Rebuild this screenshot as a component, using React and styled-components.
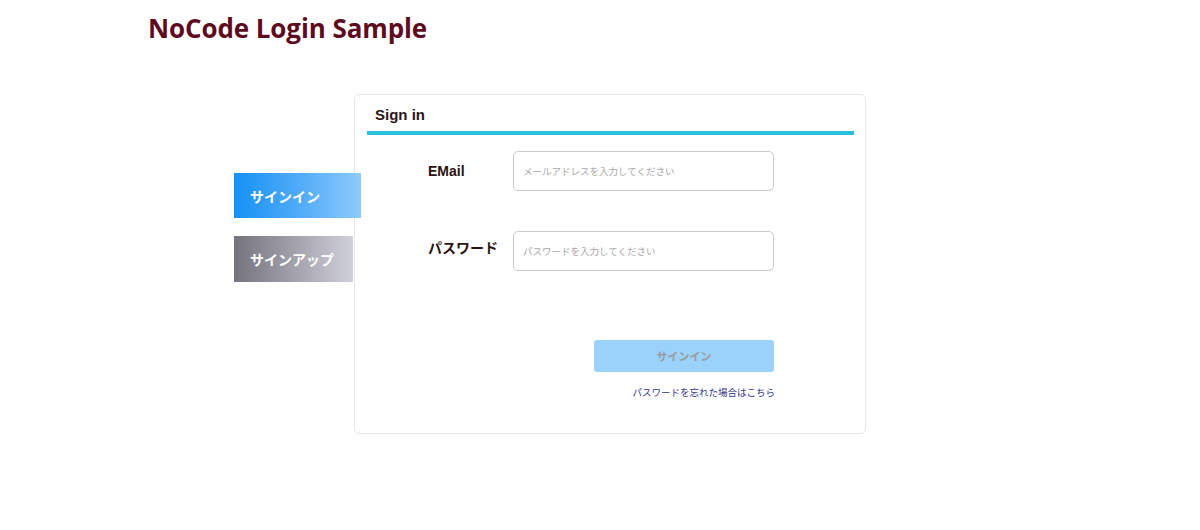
import React, { useState } from "react";
import styled, { createGlobalStyle } from "styled-components";

const GlobalStyle = createGlobalStyle`
  body {
    margin: 0;
    background: #ffffff;
    font-family: "Liberation Sans", "Noto Sans CJK JP", sans-serif;
  }
`;

const Page = styled.div`
  width: 1200px;
  height: 530px;
  overflow: hidden;
`;

const Title = styled.h1`
  margin: 0;
  padding: 11px 0 0 148px;
  font-family: "Open Sans", sans-serif;
  font-size: 26px;
  font-weight: 700;
  letter-spacing: -0.1px;
  color: #5e0b1f;
  line-height: 34px;
`;

const Main = styled.div`
  display: flex;
  align-items: flex-start;
  padding: 49px 0 0 234px;
`;

const Side = styled.div`
  width: 120px;
  margin-top: 79px;
  display: flex;
  flex-direction: column;
  gap: 18px;
  position: relative;
  z-index: 1;
`;

const Tab = styled.div`
  height: ${(p) => (p.$active ? "45px" : "46px")};
  width: ${(p) => (p.$active ? "127px" : "119px")};
  display: flex;
  align-items: center;
  padding-left: 16px;
  box-sizing: border-box;
  color: #ffffff;
  font-family: "Noto Sans CJK JP", sans-serif;
  font-size: 14px;
  font-weight: 700;
  cursor: pointer;
  background: ${(p) =>
    p.$active
      ? "linear-gradient(90deg, #1591f5 0%, #55adf8 55%, #8dcbfb 100%)"
      : "linear-gradient(90deg, #75747d 0%, #a6a5b0 55%, #d0d0da 100%)"};
`;

const Card = styled.div`
  width: 512px;
  height: 340px;
  box-sizing: border-box;
  border: 1px solid #e6e6e6;
  border-radius: 5px;
  padding: 0 11px 0 12px;
  background: #ffffff;
`;

const CardHeader = styled.div`
  height: 31px;
  display: flex;
  align-items: flex-end;
  padding-left: 8px;
  border-bottom: 4px solid #27c0dd;
  font-size: 15px;
  font-weight: 700;
  color: #2b1616;
  line-height: 22px;
  padding-bottom: 5px;
`;

const Form = styled.div`
  display: flex;
  flex-direction: column;
  gap: 40px;
  padding: 16px 0 0 61px;
`;

const Row = styled.div`
  display: flex;
  align-items: center;
`;

const Label = styled.label`
  width: 85px;
  font-family: "Liberation Sans", "Noto Sans CJK JP", sans-serif;
  font-size: 14px;
  font-weight: 700;
  color: #2b1212;
  margin-top: ${(p) => p.$shift || "0"};
`;

const Input = styled.input`
  width: 261px;
  height: 40px;
  box-sizing: border-box;
  border: 1px solid #c9c9c9;
  border-radius: 5px;
  padding: 0 9px;
  font-family: "Noto Sans CJK JP", sans-serif;
  font-size: 9.5px;
  color: #333;
  outline: none;
  &::placeholder {
    color: #a8a8a8;
  }
`;

const Actions = styled.div`
  display: flex;
  flex-direction: column;
  align-items: flex-end;
  padding: 69px 80px 0 0;
  gap: 13px;
`;

const Button = styled.button`
  width: 180px;
  height: 32px;
  border: none;
  border-radius: 3px;
  background: #9ad2fc;
  color: #9a9a9a;
  font-family: "Noto Sans CJK JP", sans-serif;
  font-size: 11px;
  font-weight: 700;
  cursor: pointer;
`;

const Forgot = styled.a`
  font-family: "Noto Sans CJK JP", sans-serif;
  font-size: 9.5px;
  color: #35358a;
  text-decoration: none;
  margin-right: -1px;
  cursor: pointer;
`;

function App() {
  const [email, setEmail] = useState("");
  const [password, setPassword] = useState("");

  return (
    <Page>
      <GlobalStyle />
      <Title>NoCode Login Sample</Title>
      <Main>
        <Side>
          <Tab $active>サインイン</Tab>
          <Tab>サインアップ</Tab>
        </Side>
        <Card>
          <CardHeader>Sign in</CardHeader>
          <Form>
            <Row>
              <Label>EMail</Label>
              <Input
                type="text"
                value={email}
                placeholder="メールアドレスを入力してください"
                onChange={(e) => setEmail(e.target.value)}
              />
            </Row>
            <Row>
              <Label $shift="-8px">パスワード</Label>
              <Input
                type="password"
                value={password}
                placeholder="パスワードを入力してください"
                onChange={(e) => setPassword(e.target.value)}
              />
            </Row>
          </Form>
          <Actions>
            <Button>サインイン</Button>
            <Forgot>パスワードを忘れた場合はこちら</Forgot>
          </Actions>
        </Card>
      </Main>
    </Page>
  );
}

export default App;
